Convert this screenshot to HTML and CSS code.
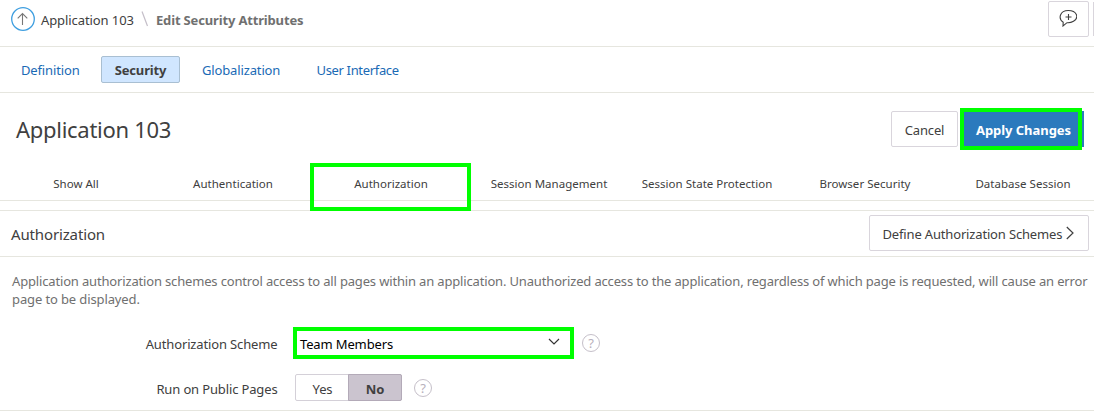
FILE: index.html
```html
<!DOCTYPE html>
<html lang="en">
<head>
<meta charset="utf-8">
<title>Edit Security Attributes</title>
<link rel="stylesheet" href="styles.css">
</head>
<body>
<header class="topbar">
  <svg class="up" viewBox="0 0 24 24"><circle cx="12" cy="12" r="11.3" fill="none" stroke="#3f9fe0" stroke-width="1.3"/><path d="M11.500 18V7M6.700 11.300 11.500 6.500 16.300 11.300" fill="none" stroke="#777" stroke-width="1.1"/></svg>
  <a class="crumb">Application 103</a>
  <svg class="slash" viewBox="0 0 8 16"><path d="M1 .5 6.500 15" fill="none" stroke="#c4bec8" stroke-width="1.2"/></svg>
  <span class="current">Edit Security Attributes</span>
  <button class="tool"><svg viewBox="0 0 18 18"><path d="M4.200 13.200C-1.200 9.500 .8 1.500 9.300 1.500S20.500 8.500 14.500 12.200Q11.500 14 8 13.700L4 17Z" fill="none" stroke="#404040" stroke-width="1.1"/><path d="M9.500 5V11M6.500 8H12.500" stroke="#404040" stroke-width="1.1"/></svg></button>
  <span class="tool-next"></span>
</header>
<nav class="nav">
  <a class="n1">Definition</a><a class="selected">Security</a><a class="n3">Globalization</a><a class="n4">User Interface</a>
</nav>
<section class="heading">
  <h1>Application 103</h1>
  <button class="btn cancel">Cancel</button>
  <button class="btn apply"><span>Apply Changes</span></button>
</section>
<nav class="tabs">
  <a>Show All</a><a>Authentication</a><a class="marked">Authorization</a><a>Session Management</a><a>Session State Protection</a><a>Browser Security</a><a>Database Session</a>
</nav>
<section class="region">
  <div class="region-head">
    <h2>Authorization</h2>
    <button class="btn define"><span>Define Authorization Schemes</span><svg viewBox="0 0 8 14"><path d="M.8 1 7 7 .8 13" fill="none" stroke="#404040" stroke-width="1.2"/></svg></button>
  </div>
  <p><span class="line1">Application authorization schemes control access to all pages within an application. Unauthorized access to the application, regardless of which page is requested, will cause an error</span> <span class="line2">page to be displayed.</span></p>
  <div class="field scheme">
    <label>Authorization Scheme</label>
    <div class="select"><span>Team Members</span><svg viewBox="0 0 12 8"><path d="M1 1 6 6 11 1" fill="none" stroke="#333" stroke-width="1.2"/></svg></div>
    <span class="help">?</span>
  </div>
  <div class="field public">
    <label>Run on Public Pages</label>
    <div class="switch"><span>Yes</span><b>No</b></div>
    <span class="help">?</span>
  </div>
</section>
</body>
</html>
```
FILE: styles.css
```css
*, *::after { box-sizing: border-box; }
body { margin: 0; width: 1094px; height: 412px; overflow: hidden; background: #fff; color: #404040; font: 13px/18px "Noto Sans", "Open Sans", sans-serif; letter-spacing: -0.14px; }
svg { display: block; flex: none; }
a, h1, h2, button, label, span { white-space: nowrap; }
button { font: inherit; color: inherit; letter-spacing: inherit; margin: 0; padding: 0; }
.topbar { display: flex; align-items: flex-start; height: 47px; border-bottom: 1px solid #e6e6df; }
.up { width: 24px; height: 24px; margin: 7px 0 0 11px; }
.crumb { width: 95px; margin: 11px 0 0 6px; letter-spacing: -0.09px; }
.slash { width: 8px; height: 16px; margin: 11px 0 0 5px; }
.current { margin: 11px 0 0 7px; color: #707070; font-weight: 700; letter-spacing: -0.16px; }
.tool { display: flex; width: 41px; height: 36px; margin: 1px 4px 0 auto; padding: 7px 0 0 10px; background: #fff; border: 1px solid #d9d5dc; border-radius: 2px; }
.tool svg { width: 18px; height: 18px; }
.tool-next { width: 1px; height: 34px; margin-top: 2px; background: #d9d5dc; }
.nav { display: flex; height: 46px; padding: 9px 0 0 21px; border-bottom: 1px solid #e6e6df; color: #1a6ab5; line-height: 28px; }
.n1 { width: 80px; letter-spacing: -0.14px; }
.selected { width: 79px; height: 27px; line-height: 26px; margin-right: 22px; border: 1px solid #a9bfd2; border-radius: 2px; background: #d0e6ff; color: #404040; text-align: center; font-weight: 700; }
.n3 { width: 114.5px; }
.n4 { letter-spacing: -0.34px; }
.heading { display: flex; height: 78px; padding-left: 16px; }
h1 { margin: 20px auto 0 0; font-size: 22px; line-height: 32px; font-weight: 400; letter-spacing: -0.28px; }
.btn { border: 1px solid #d9d5dc; border-radius: 2px; background: #fff; height: 36px; }
.cancel { width: 67px; margin-top: 18px; line-height: 36px; }
.apply { position: relative; width: 124px; height: 42px; margin: 15px 10px 0 2px; padding: 2px 0 0 3px; border: 0; background: linear-gradient(#2b7abd, #2b7abd) no-repeat 0 3px / 100% 36px; color: #fff; font-weight: 700; letter-spacing: -0.05px; }
.apply::after { content: ""; position: absolute; inset: 0 2px 0 0; border: 4px solid #0f0; }
.tabs { position: relative; display: grid; grid-template-columns: repeat(7, 158px); height: 30px; margin-left: -3px; border-bottom: 1px solid #e6e6df; text-align: center; font-size: 11.5px; line-height: 25px; letter-spacing: 0.02px; }
.tabs a { padding-right: 2px; }
.tabs a:first-child { padding: 0; }
.marked::after { content: ""; position: absolute; z-index: 1; left: 313px; top: -8px; width: 161px; height: 48px; border: 4px solid #0f0; }
.region { height: 201px; margin-top: 9px; border-top: 1px solid #e6e6df; border-bottom: 1px solid #e6e6df; }
.region-head { display: flex; justify-content: space-between; height: 46px; padding: 4px 5px 0 11px; border-bottom: 1px solid #e6e6df; }
h2 { margin: 6px 0 0; font-size: 15px; line-height: 26px; font-weight: 400; }
.define { display: flex; align-items: center; gap: 4px; width: 220px; padding: 2px 0 0 12.5px; letter-spacing: -0.16px; }
.define svg { width: 8px; height: 14px; margin-top: -3px; }
p { display: flex; flex-direction: column; height: 36px; margin: 15px 0 0 12px; color: #707070; }
.line1 { letter-spacing: -0.162px; }
.line2 { letter-spacing: -0.12px; }
.field { display: flex; align-items: flex-start; }
.field label { width: 277.500px; text-align: right; line-height: 18px; }
.scheme { height: 33px; margin-top: 19px; }
.scheme label { padding-top: 8px; }
.select { display: flex; align-items: center; justify-content: space-between; width: 281px; height: 32px; margin-left: 15.500px; padding: 1px 10px 0 3px; border: 4px solid #0f0; color: #000; }
.select svg { width: 12px; height: 8px; margin-top: -3px; }
.help { width: 18px; height: 18px; border: 1px solid #c5bfc9; border-radius: 50%; color: #b7b0bb; font-size: 13px; line-height: 17px; text-align: center; margin: 7px 0 0 8px; }
.public { margin-top: 14px; }
.public label { padding-top: 6px; }
.switch { display: flex; width: 107px; height: 27px; margin-left: 17.500px; border: 1px solid #d4d0d8; border-radius: 2px; text-align: center; line-height: 29px; }
.switch span { width: 53px; }
.switch b { flex: 1; margin: -1px; line-height: 29px; border: 1px solid #b3aab8; border-radius: 0 2px 2px 0; background: #cbc4cf; }
.public .help { margin: 5px 0 0 12px; }
```
